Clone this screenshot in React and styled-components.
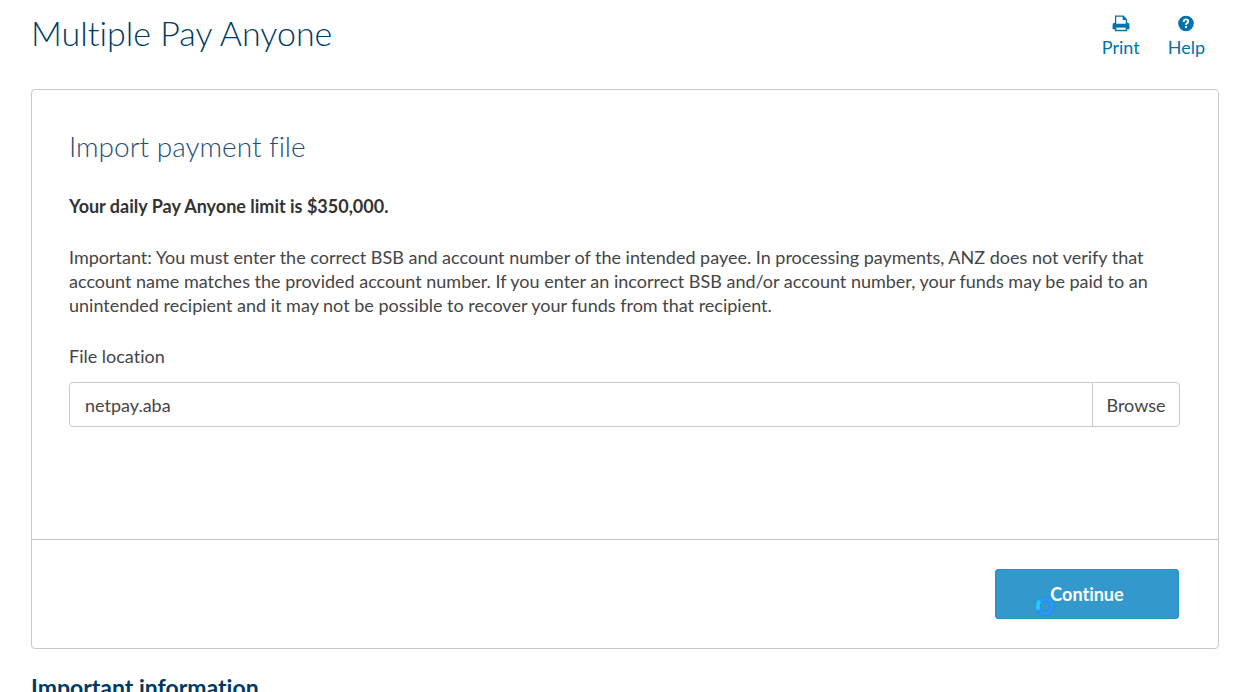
import React, { useState } from "react";
import styled, { createGlobalStyle } from "styled-components";

const GlobalStyle = createGlobalStyle`
  *, *::before, *::after { box-sizing: border-box; }
  html { overflow: hidden; }
  body {
    margin: 0;
    background: #fff;
    color: #454545;
    font-family: Lato, "Open Sans", sans-serif;
    font-size: 18px;
    line-height: 24px;
    font-variant-ligatures: none;
  }
  h1, h2, h3, p { margin: 0; }
`;

const Page = styled.main`
  padding: 11px 33px 0 31px;
`;

const Header = styled.header`
  display: flex;
  justify-content: space-between;
  align-items: flex-start;
  height: 78px;
`;

const Title = styled.h1`
  color: #003a63;
  font-size: 34px;
  font-weight: 300;
  line-height: 44px;
`;

const Tools = styled.nav`
  display: flex;
  gap: 28px;
  padding: 4px 14px 0 0;
`;

const ToolLink = styled.a`
  display: flex;
  flex-direction: column;
  align-items: center;
  gap: 2px;
  color: #0072ac;
  text-decoration: none;
`;

const Card = styled.section`
  border: 1px solid #c8c8c8;
  border-radius: 4px;
`;

const CardBody = styled.div`
  padding: 37px 38px 112px 37px;
`;

const CardTitle = styled.h2`
  margin-bottom: 29px;
  color: #1f4e79;
  font-size: 28px;
  font-weight: 300;
  line-height: 38px;
`;

const Limit = styled.p`
  margin-bottom: 27px;
  color: #333;
  font-weight: 700;
`;

const Notice = styled.p`
  margin-bottom: 27px;
`;

const Label = styled.label`
  display: block;
  margin-bottom: 14px;
`;

const FileField = styled.div`
  display: flex;
  height: 45px;
  border: 1px solid #c8c8c8;
  border-radius: 4px;
`;

const FileInput = styled.input`
  flex: 1;
  min-width: 0;
  padding: 0 15px;
  border: 0;
  background: transparent;
  color: inherit;
  font: inherit;
`;

const BrowseButton = styled.button`
  width: 87px;
  padding: 0;
  border: 0;
  border-left: 1px solid #c8c8c8;
  background: transparent;
  color: inherit;
  font: inherit;
`;

const CardFooter = styled.div`
  display: flex;
  justify-content: flex-end;
  padding: 29px 39px;
  border-top: 1px solid #c8c8c8;
`;

const ContinueButton = styled.button`
  position: relative;
  width: 184px;
  height: 50px;
  padding: 0;
  border: 1px solid #2490c8;
  border-radius: 3px;
  background: #3398cc;
  color: #fff;
  font: inherit;
  font-weight: 700;
`;

const BusyRing = styled.svg`
  position: absolute;
  left: 39px;
  top: 26px;
`;

const SectionTitle = styled.h3`
  padding-top: 24px;
  color: #003a63;
  font-size: 23px;
  font-weight: 700;
  line-height: 28px;
`;

const PrintIcon = () => (
  <svg width="18" height="18" viewBox="0 0 18 18" aria-hidden="true">
    <path d="M3.6 9V1.2h7.6l3.2 3.2V9" fill="none" stroke="#0072ac" strokeWidth="1.3" />
    <path d="M10.6 1v4h4z" fill="#0072ac" />
    <path d="M2.6 7.8h.9v1h11v-1h.9a2 2 0 0 1 2 2v4.4h-2.2v2H2.8v-2H.6V9.8a2 2 0 0 1 2-2z" fill="#0072ac" />
    <path d="M4.3 12.6h9.4v2.2H4.3z" fill="#fff" />
  </svg>
);

const HelpIcon = () => (
  <svg width="18" height="18" viewBox="0 0 18 18" aria-hidden="true">
    <circle cx="9" cy="8.5" r="7.8" fill="#0072ac" />
    <path d="M6.7 7V6.4Q6.9 4.4 9 4.4T11.3 6.4Q11.3 7.4 10 8.1Q9 8.7 9 9.9" fill="none" stroke="#fff" strokeWidth="1.8" />
    <rect x="8" y="11" width="2" height="2" fill="#fff" />
  </svg>
);

const Busy = () => (
  <BusyRing width="20" height="20" viewBox="0 0 20 20" aria-hidden="true">
    <circle cx="10" cy="10" r="7.2" fill="none" stroke="#2589dc" strokeWidth="5.2" />
    <circle cx="10" cy="10" r="7.2" fill="none" stroke="#2b98f5" strokeWidth="4" />
    <path d="M3.7 13.5A7.2 7.2 0 0 1 4.9 5" fill="none" stroke="#25c8ff" strokeWidth="4" />
  </BusyRing>
);

export default function App() {
  const [file, setFile] = useState("netpay.aba");
  return (
    <>
      <GlobalStyle />
      <Page>
        <Header>
          <Title>Multiple Pay Anyone</Title>
          <Tools>
            <ToolLink href="#print"><PrintIcon />Print</ToolLink>
            <ToolLink href="#help"><HelpIcon />Help</ToolLink>
          </Tools>
        </Header>
        <Card>
          <CardBody>
            <CardTitle>Import payment file</CardTitle>
            <Limit>Your daily Pay Anyone limit is $350,000.</Limit>
            <Notice>
              Important: You must enter the correct BSB and account number of the intended payee. In processing payments, ANZ does not verify that<br />
              account name matches the provided account number. If you enter an incorrect BSB and/or account number, your funds may be paid to an<br />
              unintended recipient and it may not be possible to recover your funds from that recipient.
            </Notice>
            <Label htmlFor="file">File location</Label>
            <FileField>
              <FileInput id="file" value={file} onChange={(e) => setFile(e.target.value)} />
              <BrowseButton type="button">Browse</BrowseButton>
            </FileField>
          </CardBody>
          <CardFooter>
            <ContinueButton type="button">Continue<Busy /></ContinueButton>
          </CardFooter>
        </Card>
        <SectionTitle>Important information</SectionTitle>
      </Page>
    </>
  );
}
